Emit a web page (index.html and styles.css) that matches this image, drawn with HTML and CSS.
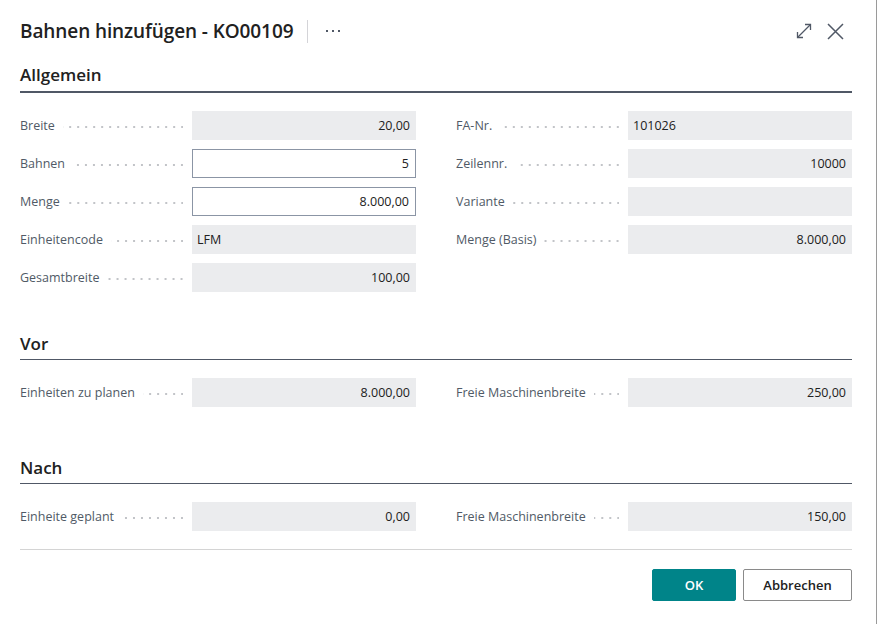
FILE: index.html
```html
<!DOCTYPE html>
<html lang="de">
<head>
<meta charset="utf-8">
<title>Bahnen hinzufügen</title>
<link rel="stylesheet" href="styles.css">
</head>
<body>
<div class="dialog">
  <div class="header">
    <h1 class="title">Bahnen hinzufügen - KO00109</h1>
    <span class="sep"></span>
    <span class="more"><i></i><i></i><i></i></span>
    <div class="header-icons">
      <svg class="icon" width="16" height="16" viewBox="0 0 16 16" fill="none" stroke="#505866" stroke-width="1.3">
        <path d="M1.5 14.5 L14.5 1.5"/>
        <path d="M9 1.5 H14.5 V7"/>
        <path d="M1.5 9 V14.5 H7"/>
      </svg>
      <svg class="icon close" width="17" height="17" viewBox="0 0 17 17" fill="none" stroke="#505866" stroke-width="1.5">
        <path d="M1 1 L16 16 M16 1 L1 16"/>
      </svg>
    </div>
  </div>

  <section class="section">
    <h2 class="section-title main">Allgemein</h2>
    <div class="grid">
      <div class="col">
        <div class="row"><span class="label">Breite</span><span class="dots"></span><span class="field num">20,00</span></div>
        <div class="row"><span class="label">Bahnen</span><span class="dots"></span><span class="field input num">5</span></div>
        <div class="row"><span class="label">Menge</span><span class="dots"></span><span class="field input num">8.000,00</span></div>
        <div class="row"><span class="label">Einheitencode</span><span class="dots"></span><span class="field">LFM</span></div>
        <div class="row"><span class="label">Gesamtbreite</span><span class="dots"></span><span class="field num">100,00</span></div>
      </div>
      <div class="col">
        <div class="row"><span class="label">FA-Nr.</span><span class="dots"></span><span class="field">101026</span></div>
        <div class="row"><span class="label">Zeilennr.</span><span class="dots"></span><span class="field num">10000</span></div>
        <div class="row"><span class="label">Variante</span><span class="dots"></span><span class="field"></span></div>
        <div class="row"><span class="label">Menge (Basis)</span><span class="dots"></span><span class="field num">8.000,00</span></div>
      </div>
    </div>
  </section>

  <section class="section vor">
    <h2 class="section-title">Vor</h2>
    <div class="grid">
      <div class="col">
        <div class="row"><span class="label">Einheiten zu planen</span><span class="dots"></span><span class="field num">8.000,00</span></div>
      </div>
      <div class="col">
        <div class="row"><span class="label">Freie Maschinenbreite</span><span class="dots"></span><span class="field num">250,00</span></div>
      </div>
    </div>
  </section>

  <section class="section nach">
    <h2 class="section-title">Nach</h2>
    <div class="grid">
      <div class="col">
        <div class="row"><span class="label">Einheite geplant</span><span class="dots"></span><span class="field num">0,00</span></div>
      </div>
      <div class="col">
        <div class="row"><span class="label">Freie Maschinenbreite</span><span class="dots"></span><span class="field num">150,00</span></div>
      </div>
    </div>
  </section>

  <div class="footer">
    <button class="btn primary">OK</button>
    <button class="btn">Abbrechen</button>
  </div>
</div>
</body>
</html>
```
FILE: styles.css
```css
html, body {
  margin: 0;
  padding: 0;
  background: #ffffff;
}
body {
  font-family: "Segoe UI", "Open Sans", "Noto Sans", sans-serif;
  color: #212121;
}
.dialog {
  box-sizing: border-box;
  width: 877px;
  height: 624px;
  padding: 16px 24px 0 20px;
  border-right: 1px solid #9a9a9a;
}
.header {
  display: flex;
  align-items: center;
  height: 30px;
}
.title {
  margin: 0;
  font-size: 19px;
  font-weight: 600;
  line-height: 30px;
  color: #212121;
  letter-spacing: -0.1px;
}
.sep {
  width: 1px;
  height: 23px;
  background: #d4d4d8;
  margin-left: 14px;
}
.more {
  display: flex;
  gap: 4px;
  margin-left: 18px;
}
.more i {
  width: 2px;
  height: 2px;
  background: #505866;
  display: block;
}
.header-icons {
  margin-left: auto;
  display: flex;
  align-items: center;
  gap: 15px;
  margin-right: 8px;
}
.icon { display: block; }

.section-title {
  margin: 0;
  font-size: 17px;
  font-weight: 600;
  line-height: 24px;
  padding-bottom: 3px;
  border-bottom: 1px solid #505866;
  color: #212121;
}
.section-title.main {
  padding-bottom: 4px;
  border-bottom-width: 2px;
}
.section:first-of-type { margin-top: 17px; }
.section.vor { margin-top: 40px; }
.section.nach { margin-top: 49px; }

.grid {
  display: grid;
  grid-template-columns: 396px 396px;
  column-gap: 40px;
  margin-top: 18px;
  align-items: start;
}
.col {
  display: flex;
  flex-direction: column;
  gap: 9px;
}
.row {
  display: flex;
  align-items: center;
  height: 29px;
}
.label {
  font-size: 12.5px;
  color: #505a66;
  white-space: nowrap;
  padding-right: 8px;
}
.dots {
  flex: 1;
  align-self: stretch;
  margin-right: 9px;
  background-image: linear-gradient(to right, #c2c4c8 0 2px, transparent 2px);
  background-size: 8px 2px;
  background-repeat: repeat-x;
  background-position: right 2px top 15px;
}
.field {
  box-sizing: border-box;
  width: 224px;
  height: 29px;
  flex: none;
  background: #ebecee;
  font-size: 12.5px;
  line-height: 29px;
  color: #212121;
  padding: 0 6px 0 5px;
}
.field.num { text-align: right; }
.field.input {
  background: #ffffff;
  border: 1px solid #8b95a5;
  line-height: 27px;
}

.footer {
  margin-top: 18px;
  border-top: 1px solid #d4d4d4;
  padding-top: 19px;
  display: flex;
  justify-content: flex-end;
  gap: 7px;
}
.btn {
  font-family: inherit;
  height: 32px;
  font-size: 13px;
  font-weight: 600;
  border-radius: 2px;
  border: 1px solid #8a8a8a;
  background: #ffffff;
  color: #212121;
  width: 109px;
  padding: 0;
}
.btn.primary {
  width: 84px;
  background: #008489;
  border-color: #008489;
  color: #ffffff;
}
```
